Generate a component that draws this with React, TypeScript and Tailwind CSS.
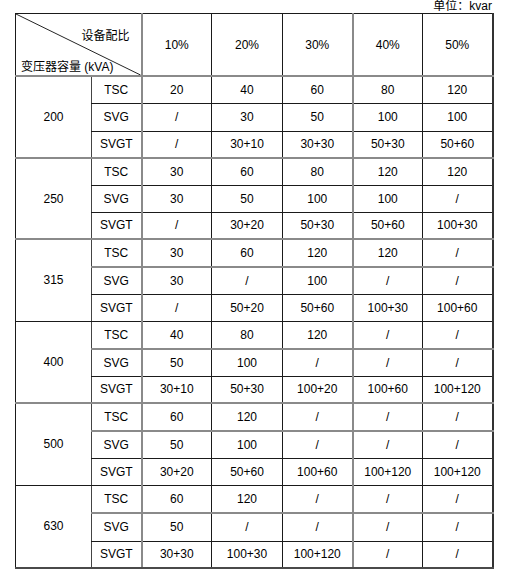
const groups = [
  {
    cap: "200",
    rows: [
      ["TSC", "20", "40", "60", "80", "120"],
      ["SVG", "/", "30", "50", "100", "100"],
      ["SVGT", "/", "30+10", "30+30", "50+30", "50+60"],
    ],
  },
  {
    cap: "250",
    rows: [
      ["TSC", "30", "60", "80", "120", "120"],
      ["SVG", "30", "50", "100", "100", "/"],
      ["SVGT", "/", "30+20", "50+30", "50+60", "100+30"],
    ],
  },
  {
    cap: "315",
    rows: [
      ["TSC", "30", "60", "120", "120", "/"],
      ["SVG", "30", "/", "100", "/", "/"],
      ["SVGT", "/", "50+20", "50+60", "100+30", "100+60"],
    ],
  },
  {
    cap: "400",
    rows: [
      ["TSC", "40", "80", "120", "/", "/"],
      ["SVG", "50", "100", "/", "/", "/"],
      ["SVGT", "30+10", "50+30", "100+20", "100+60", "100+120"],
    ],
  },
  {
    cap: "500",
    rows: [
      ["TSC", "60", "120", "/", "/", "/"],
      ["SVG", "50", "100", "/", "/", "/"],
      ["SVGT", "30+20", "50+60", "100+60", "100+120", "100+120"],
    ],
  },
  {
    cap: "630",
    rows: [
      ["TSC", "60", "120", "/", "/", "/"],
      ["SVG", "50", "/", "/", "/", "/"],
      ["SVGT", "30+30", "100+30", "100+120", "/", "/"],
    ],
  },
];

// linien wie im original: manche grau/dicker, manche schwarz
const BLACK_B = "border-b border-b-[#1a1a1a]";
const GRAY_B = "border-b-2 border-b-[#8a8a8a]";
const rowBottom = [
  BLACK_B, BLACK_B, GRAY_B,
  BLACK_B, BLACK_B, GRAY_B,
  GRAY_B, BLACK_B, BLACK_B,
  GRAY_B, BLACK_B, GRAY_B,
  GRAY_B, BLACK_B, BLACK_B,
  GRAY_B, BLACK_B, "border-b-2 border-b-[#4a4a4a]",
];
const rowHeight = [
  "h-[27px]", "h-[28px]", "h-[27px]",
  "h-[27px]", "h-[27px]", "h-[27px]",
  "h-[28px]", "h-[27px]", "h-[27px]",
  "h-[28px]", "h-[27px]", "h-[27px]",
  "h-[28px]", "h-[27px]", "h-[27px]",
  "h-[28px]", "h-[28px]", "h-[27px]",
];
// linke kante jeder spalte (ab spalte "TSC")
const colLeft = [
  "border-l border-l-[#444]",
  "border-l-2 border-l-[#8a8a8a]",
  "border-l border-l-[#1a1a1a]",
  "border-l border-l-[#1a1a1a]",
  "border-l-2 border-l-[#8a8a8a]",
  "border-l border-l-[#1a1a1a]",
];

export default function App() {
  return (
    <div
      className="bg-white w-[518px] h-[575px] pl-[15px] text-[12px] text-black"
      style={{ fontFamily: '"Liberation Sans", Arial, "Noto Sans CJK SC", sans-serif' }}
    >
      <div className="w-[477px] h-[13px] leading-[13px] text-right">单位：kvar</div>

      <table className="table-fixed w-[477px] border-collapse border-t border-t-[#1a1a1a] border-r-2 border-r-[#333]">
        <colgroup>
          <col className="w-[76px]" />
          <col className="w-[50px]" />
          <col className="w-[70px]" />
          <col className="w-[71px]" />
          <col className="w-[70px]" />
          <col className="w-[70px]" />
          <col className="w-[70px]" />
        </colgroup>
        <thead>
          <tr className="h-[62px]">
            <th colSpan={2} className="p-0 font-normal border-l border-l-[#1a1a1a] border-b-2 border-b-[#8a8a8a]">
              <div className="relative h-[61px] flex flex-col justify-between pt-[15px] pb-[1px]">
                <svg className="absolute inset-0 w-full h-full" preserveAspectRatio="none" viewBox="0 0 126 61">
                  <line x1="0" y1="0" x2="126" y2="61" stroke="#222" strokeWidth="1" />
                </svg>
                <div className="text-right pr-[11px] leading-[14px]">设备配比</div>
                <div className="text-left pl-[5px] leading-[14px]">变压器容量 (kVA)</div>
              </div>
            </th>
            {["10%", "20%", "30%", "40%", "50%"].map((p, i) => (
              <th key={p} className={`p-0 font-normal text-center border-b-2 border-b-[#8a8a8a] ${colLeft[i + 1]}`}>
                {p}
              </th>
            ))}
          </tr>
        </thead>
        <tbody>
          {groups.map((g, gi) =>
            g.rows.map((r, ri) => {
              const idx = gi * 3 + ri;
              return (
                <tr key={idx} className={rowHeight[idx]}>
                  {ri === 0 && (
                    <td rowSpan={3} className={`p-0 text-center border-l border-l-[#1a1a1a] ${rowBottom[gi * 3 + 2]}`}>
                      {g.cap}
                    </td>
                  )}
                  {r.map((v, ci) => (
                    <td key={ci} className={`p-0 text-center ${colLeft[ci]} ${rowBottom[idx]}`}>
                      {v}
                    </td>
                  ))}
                </tr>
              );
            })
          )}
        </tbody>
      </table>
    </div>
  );
}
